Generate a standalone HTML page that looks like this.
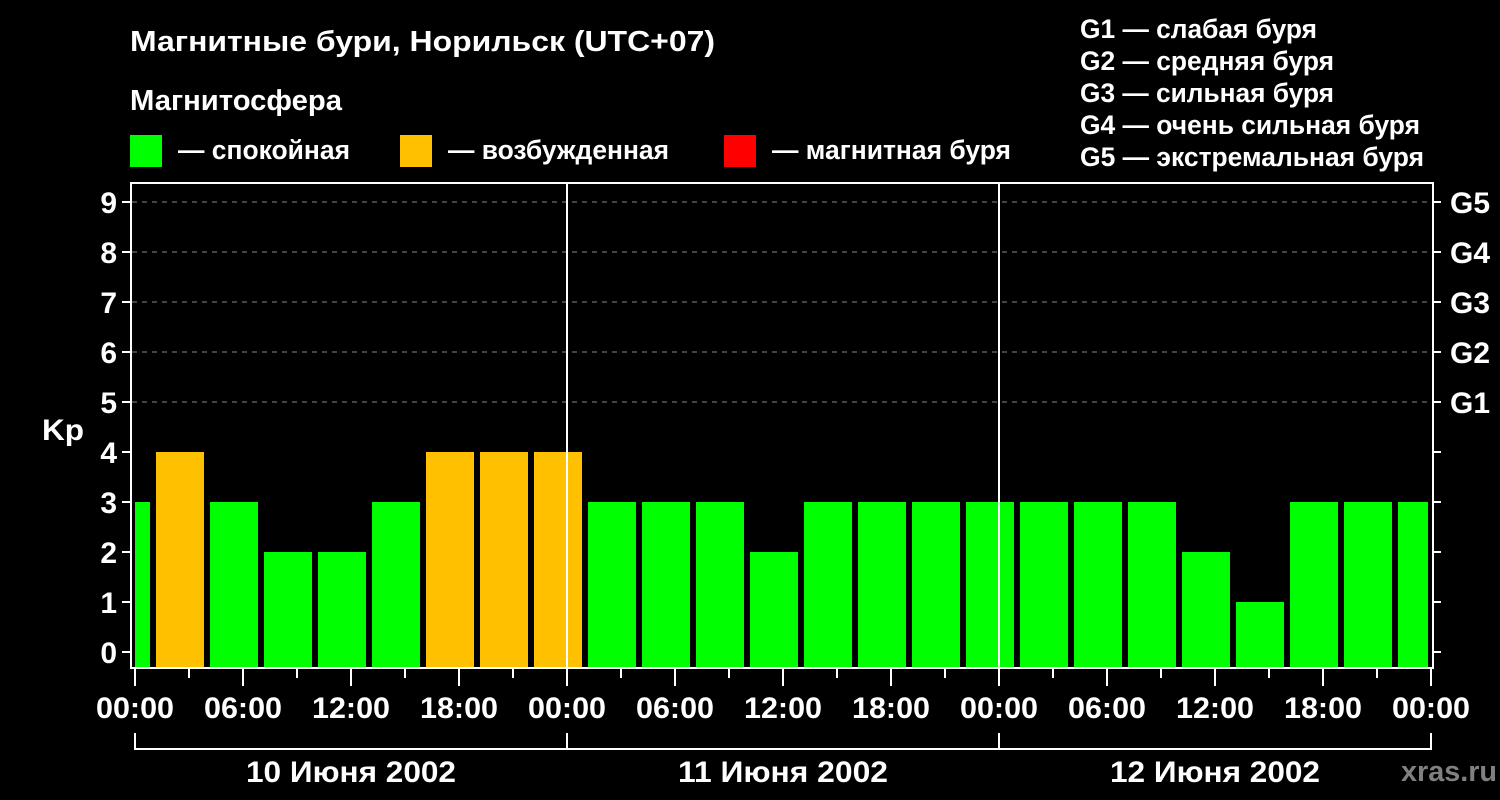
<!DOCTYPE html>
<html><head><meta charset="utf-8"><style>html,body{margin:0;padding:0;background:#000;}svg{display:block}</style></head><body>
<svg width="1500" height="800" xmlns="http://www.w3.org/2000/svg" font-family="'Liberation Sans', sans-serif" font-weight="bold" fill="#fff">
<rect width="1500" height="800" fill="#000"/>
<text x="130" y="51" font-size="29" textLength="585" lengthAdjust="spacingAndGlyphs">Магнитные бури, Норильск (UTC+07)</text>
<text x="130" y="110" font-size="29" textLength="212" lengthAdjust="spacingAndGlyphs">Магнитосфера</text>
<rect x="130" y="135" width="32" height="32" fill="#00ff00"/>
<text x="178" y="159" font-size="27" textLength="172" lengthAdjust="spacingAndGlyphs">— спокойная</text>
<rect x="400" y="135" width="32" height="32" fill="#ffc000"/>
<text x="448" y="159" font-size="27" textLength="221" lengthAdjust="spacingAndGlyphs">— возбужденная</text>
<rect x="724" y="135" width="32" height="32" fill="#ff0000"/>
<text x="772" y="159" font-size="27" textLength="239" lengthAdjust="spacingAndGlyphs">— магнитная буря</text>
<g font-size="27">
<text x="1080" y="38" textLength="237" lengthAdjust="spacingAndGlyphs">G1 — слабая буря</text>
<text x="1080" y="70" textLength="254" lengthAdjust="spacingAndGlyphs">G2 — средняя буря</text>
<text x="1080" y="102" textLength="254" lengthAdjust="spacingAndGlyphs">G3 — сильная буря</text>
<text x="1080" y="134" textLength="340" lengthAdjust="spacingAndGlyphs">G4 — очень сильная буря</text>
<text x="1080" y="166" textLength="344" lengthAdjust="spacingAndGlyphs">G5 — экстремальная буря</text>
</g>
<g stroke="#888" stroke-width="1" stroke-dasharray="5,5">
<line x1="132" y1="202" x2="1432" y2="202"/><line x1="132" y1="252" x2="1432" y2="252"/><line x1="132" y1="302" x2="1432" y2="302"/><line x1="132" y1="352" x2="1432" y2="352"/><line x1="132" y1="402" x2="1432" y2="402"/>
</g>
<g>
<rect x="135" y="502" width="15" height="166" fill="#00ff00"/>
<rect x="156" y="452" width="48" height="216" fill="#ffc000"/>
<rect x="210" y="502" width="48" height="166" fill="#00ff00"/>
<rect x="264" y="552" width="48" height="116" fill="#00ff00"/>
<rect x="318" y="552" width="48" height="116" fill="#00ff00"/>
<rect x="372" y="502" width="48" height="166" fill="#00ff00"/>
<rect x="426" y="452" width="48" height="216" fill="#ffc000"/>
<rect x="480" y="452" width="48" height="216" fill="#ffc000"/>
<rect x="534" y="452" width="48" height="216" fill="#ffc000"/>
<rect x="588" y="502" width="48" height="166" fill="#00ff00"/>
<rect x="642" y="502" width="48" height="166" fill="#00ff00"/>
<rect x="696" y="502" width="48" height="166" fill="#00ff00"/>
<rect x="750" y="552" width="48" height="116" fill="#00ff00"/>
<rect x="804" y="502" width="48" height="166" fill="#00ff00"/>
<rect x="858" y="502" width="48" height="166" fill="#00ff00"/>
<rect x="912" y="502" width="48" height="166" fill="#00ff00"/>
<rect x="966" y="502" width="48" height="166" fill="#00ff00"/>
<rect x="1020" y="502" width="48" height="166" fill="#00ff00"/>
<rect x="1074" y="502" width="48" height="166" fill="#00ff00"/>
<rect x="1128" y="502" width="48" height="166" fill="#00ff00"/>
<rect x="1182" y="552" width="48" height="116" fill="#00ff00"/>
<rect x="1236" y="602" width="48" height="66" fill="#00ff00"/>
<rect x="1290" y="502" width="48" height="166" fill="#00ff00"/>
<rect x="1344" y="502" width="48" height="166" fill="#00ff00"/>
<rect x="1398" y="502" width="30" height="166" fill="#00ff00"/>
</g>
<g stroke="#fff" stroke-width="2" fill="none">
<rect x="131" y="183" width="1302" height="485"/>
<line x1="567" y1="182" x2="567" y2="668"/><line x1="999" y1="182" x2="999" y2="668"/>
<path d="M122 202H131M122 252H131M122 302H131M122 352H131M122 402H131M122 452H131M122 502H131M122 552H131M122 602H131M122 652H131"/>
<path d="M1433 202H1441M1433 252H1441M1433 302H1441M1433 352H1441M1433 402H1441M1433 452H1441M1433 502H1441M1433 552H1441M1433 602H1441M1433 652H1441"/>
<path d="M135 668V686M243 668V686M351 668V686M459 668V686M567 668V686M675 668V686M783 668V686M891 668V686M999 668V686M1107 668V686M1215 668V686M1323 668V686M1431 668V686"/>
<path d="M189 668V678M297 668V678M405 668V678M513 668V678M621 668V678M729 668V678M837 668V678M945 668V678M1053 668V678M1161 668V678M1269 668V678M1377 668V678"/>
<path d="M135 733V749H1431V733M567 733V749M999 733V749"/>
</g>
<g font-size="30" text-anchor="end">
<text x="117" y="213">9</text><text x="117" y="263">8</text><text x="117" y="313">7</text><text x="117" y="363">6</text><text x="117" y="413">5</text><text x="117" y="463">4</text><text x="117" y="513">3</text><text x="117" y="563">2</text><text x="117" y="613">1</text><text x="117" y="663">0</text>
</g>
<text x="42" y="440" font-size="30" textLength="42" lengthAdjust="spacingAndGlyphs">Kp</text>
<g font-size="30">
<text x="1450" y="213" textLength="40" lengthAdjust="spacingAndGlyphs">G5</text><text x="1450" y="263" textLength="40" lengthAdjust="spacingAndGlyphs">G4</text><text x="1450" y="313" textLength="40" lengthAdjust="spacingAndGlyphs">G3</text><text x="1450" y="363" textLength="40" lengthAdjust="spacingAndGlyphs">G2</text><text x="1450" y="413" textLength="40" lengthAdjust="spacingAndGlyphs">G1</text>
</g>
<g font-size="30" text-anchor="middle">
<text x="135" y="718" textLength="78" lengthAdjust="spacingAndGlyphs">00:00</text><text x="243" y="718" textLength="78" lengthAdjust="spacingAndGlyphs">06:00</text><text x="351" y="718" textLength="78" lengthAdjust="spacingAndGlyphs">12:00</text><text x="459" y="718" textLength="78" lengthAdjust="spacingAndGlyphs">18:00</text><text x="567" y="718" textLength="78" lengthAdjust="spacingAndGlyphs">00:00</text><text x="675" y="718" textLength="78" lengthAdjust="spacingAndGlyphs">06:00</text><text x="783" y="718" textLength="78" lengthAdjust="spacingAndGlyphs">12:00</text><text x="891" y="718" textLength="78" lengthAdjust="spacingAndGlyphs">18:00</text><text x="999" y="718" textLength="78" lengthAdjust="spacingAndGlyphs">00:00</text><text x="1107" y="718" textLength="78" lengthAdjust="spacingAndGlyphs">06:00</text><text x="1215" y="718" textLength="78" lengthAdjust="spacingAndGlyphs">12:00</text><text x="1323" y="718" textLength="78" lengthAdjust="spacingAndGlyphs">18:00</text><text x="1431" y="718" textLength="78" lengthAdjust="spacingAndGlyphs">00:00</text>
<text x="351" y="782" textLength="210" lengthAdjust="spacingAndGlyphs">10 Июня 2002</text><text x="783" y="782" textLength="210" lengthAdjust="spacingAndGlyphs">11 Июня 2002</text><text x="1215" y="782" textLength="210" lengthAdjust="spacingAndGlyphs">12 Июня 2002</text>
</g>
<text x="1401" y="781" font-size="29" fill="#808080" textLength="96" lengthAdjust="spacingAndGlyphs">xras.ru</text>
</svg>
</body></html>
